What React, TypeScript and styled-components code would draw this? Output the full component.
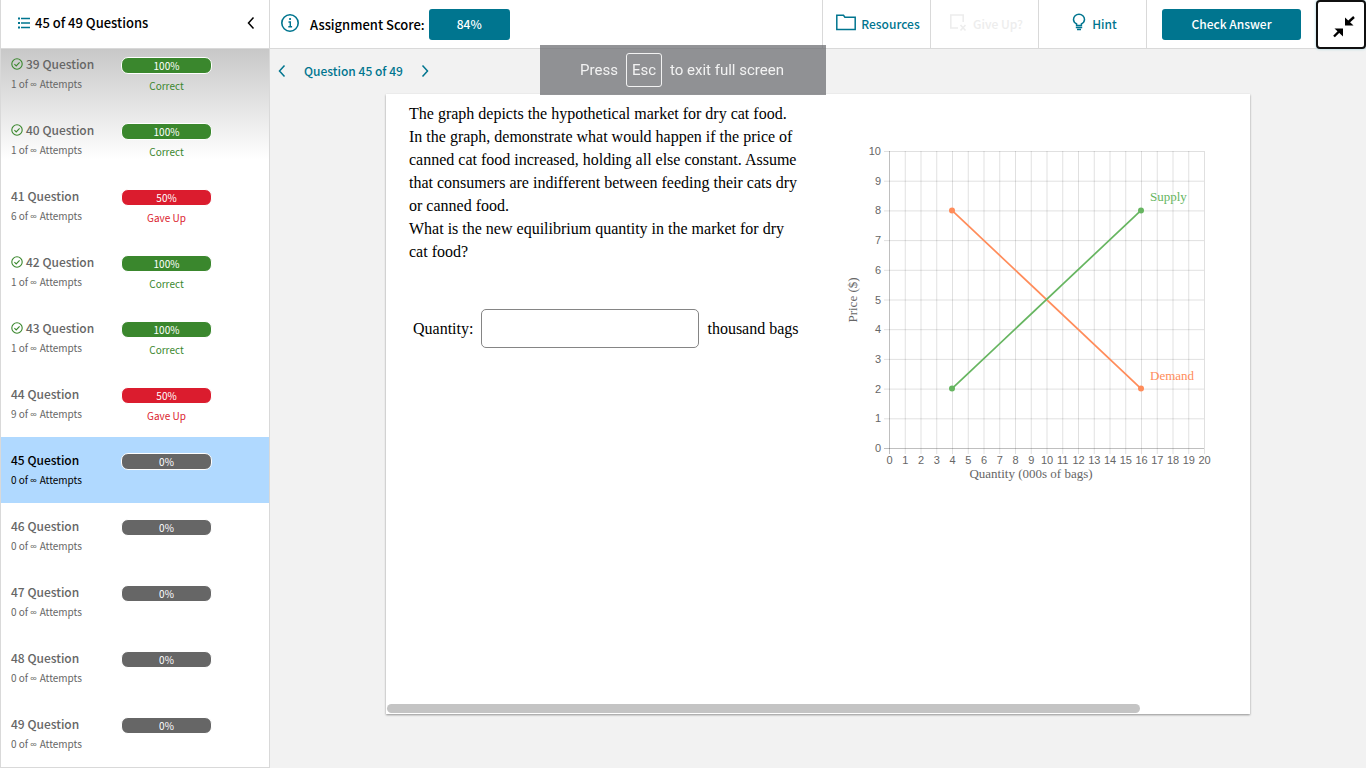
import React from 'react';
import styled, { createGlobalStyle } from 'styled-components';

const TEAL = '#00758f';
const LINE = '#d9d9d9';

const GlobalStyle = createGlobalStyle`
  *, *::before, *::after { box-sizing: border-box; }
  body {
    margin: 0;
    background: #f2f2f2;
    font-family: "Noto Sans CJK SC", sans-serif;
    font-size: 12px;
    color: #000;
  }
  button { font: inherit; cursor: pointer; }
`;

const Page = styled.div`
  display: flex;
  height: 100vh;
  overflow: hidden;
`;

const Sidebar = styled.aside`
  display: flex;
  flex-direction: column;
  flex: none;
  width: 270px;
  background: #fff;
  border: 1px solid ${LINE};
  border-top: 0;
`;

const SidebarHeader = styled.header`
  display: flex;
  align-items: center;
  flex: none;
  gap: 5px;
  height: 49px;
  padding: 0 12px 2px 17px;
  border-bottom: 1px solid ${LINE};
`;

const SidebarTitle = styled.h2`
  flex: 1;
  margin: 0;
  font-size: 13px;
  line-height: 20px;
  font-weight: 500;
`;

const IconButton = styled.button`
  display: flex;
  padding: 2px;
  border: 0;
  background: none;
  color: inherit;
`;

const QuestionList = styled.ul`
  display: flex;
  flex: 1;
  flex-direction: column;
  justify-content: flex-end;
  min-height: 0;
  margin: 0;
  padding: 0;
  overflow: hidden;
  list-style: none;
  background: linear-gradient(#c8c8c8, #fff 110px);
`;

const QuestionItem = styled.li<{ $active: boolean }>`
  display: flex;
  flex: none;
  gap: 16px;
  height: 66px;
  padding: 13px 10px 0;
  color: ${(p) => (p.$active ? '#000' : '#666')};
  background: ${(p) => (p.$active ? '#b0d9ff' : 'transparent')};
`;

const QuestionInfo = styled.div`
  width: 94px;
`;

const QuestionLink = styled.a`
  display: flex;
  align-items: center;
  gap: 3px;
  margin-bottom: 1px;
  color: inherit;
  font-weight: 500;
  line-height: 20px;
  text-decoration: none;
  white-space: nowrap;
`;

const Attempts = styled.div`
  font-size: 10px;
  line-height: 18px;
`;

const Infinity = styled.span`
  font-family: "Open Sans", sans-serif;
`;

const Result = styled.div<{ $color: string }>`
  width: 91px;
  padding-top: 3px;
  color: ${(p) => p.$color};
  font-size: 10px;
  line-height: 18px;
  text-align: center;
`;

const Score = styled.div<{ $color: string }>`
  height: 17px;
  margin-bottom: 3px;
  border: 1px solid #fff;
  border-radius: 7px;
  background: ${(p) => p.$color};
  color: #fff;
  line-height: 15px;
`;

const Main = styled.main`
  display: flex;
  flex: 1;
  flex-direction: column;
  min-width: 0;
`;

const TopBar = styled.header`
  display: flex;
  align-items: stretch;
  flex: none;
  height: 49px;
  background: #fff;
  border-bottom: 1px solid ${LINE};
`;

const ScoreGroup = styled.div`
  display: flex;
  align-items: center;
  flex: 1;
  padding-left: 9px;
  color: ${TEAL};
`;

const ScoreLabel = styled.span`
  margin: 0 4px 0 9px;
  color: #000;
  font-size: 13px;
  font-weight: 500;
`;

const PrimaryButton = styled.button<{ $width: number }>`
  width: ${(p) => p.$width}px;
  height: 31px;
  padding: 0 0 2px;
  border: 0;
  border-radius: 3px;
  background: ${TEAL};
  color: #fff;
  font-weight: 500;
`;

const ToolButton = styled.button`
  display: flex;
  align-items: center;
  justify-content: center;
  gap: 5px;
  width: 108px;
  padding: 0 0 2px 3px;
  border: 0;
  border-left: 1px solid ${LINE};
  background: none;
  color: ${TEAL};
  font-weight: 500;

  &:disabled { color: #ededed; }
`;

const SubmitCell = styled.div`
  display: flex;
  align-items: center;
  padding: 0 15px;
  border-left: 1px solid ${LINE};
`;

const FullscreenButton = styled.button`
  display: flex;
  align-items: center;
  justify-content: center;
  width: 50px;
  height: 49px;
  padding: 5px 0 0 6px;
  border: 2px solid #101010;
  border-radius: 4px;
  background: #fff;
  box-shadow: 0 0 3px #9fd0da;
`;

const QuestionNav = styled.nav`
  display: flex;
  align-items: center;
  flex: none;
  gap: 16px;
  height: 45px;
  padding: 0 0 2px 6px;
  color: ${TEAL};
  font-weight: 500;
`;

const Card = styled.section`
  display: flex;
  flex: 1;
  flex-direction: column;
  width: calc(100% - 32px);
  max-width: 864px;
  margin: 0 auto 54px;
  background: #fff;
  box-shadow: 0 1px 2px rgba(0, 0, 0, 0.4);
  font-family: "Liberation Serif", serif;
  font-size: 16px;
`;

const CardBody = styled.div`
  display: flex;
  flex: 1;
  gap: 43px;
  min-height: 0;
  padding: 8px 30px 0 23px;
`;

const Prompt = styled.div`
  width: 393px;
`;

const Paragraph = styled.p`
  margin: 0;
  line-height: 23px;
`;

const AnswerRow = styled.div`
  display: flex;
  align-items: center;
  gap: 8px;
  margin-top: 46px;
  padding-left: 4px;
  white-space: nowrap;
`;

const AnswerInput = styled.input`
  width: 218px;
  height: 39px;
  padding: 0 8px;
  border: 1px solid #858585;
  border-radius: 5px;
  font: inherit;
`;

const ChartFigure = styled.figure`
  flex: none;
  margin: 39px 0 0;
`;

const ScrollTrack = styled.div`
  flex: none;
  height: 10px;
  padding: 0 1px 1px;
`;

const ScrollThumb = styled.div`
  width: calc(100% - 109px);
  height: 9px;
  border-radius: 5px;
  background: #c4c4c4;
`;

const Toast = styled.div`
  position: fixed;
  top: 45px;
  left: 50%;
  display: flex;
  align-items: center;
  justify-content: center;
  gap: 8px;
  width: 286px;
  height: 50px;
  padding-right: 2px;
  transform: translateX(-50%);
  background: rgba(106, 107, 111, 0.72);
  color: #f2f2f2;
  font-family: Roboto, sans-serif;
  font-size: 15px;
  white-space: nowrap;
`;

const Key = styled.kbd`
  padding: 0 5px;
  border: 1px solid #f2f2f2;
  border-radius: 3px;
  font-family: inherit;
  font-size: 15px;
  line-height: 32px;
`;

const ListIcon = () => (
  <svg width="12" height="12" viewBox="0 0 12 12" stroke={TEAL} fill="none">
    <path d="M0 1.5h2M0 6h2M0 10.5h2" strokeWidth="2" />
    <path d="M3 1.5h9M3 6h9M3 10.5h9" strokeWidth="1.6" />
  </svg>
);

const Chevron = ({ right = false }: { right?: boolean }) => (
  <svg width="8" height="12" viewBox="0 0 8 12" fill="none" stroke="currentColor" strokeWidth="1.5">
    <path d={right ? 'M1.5 .5l5 5.5-5 5.5' : 'M6.5 .5l-5 5.5 5 5.5'} />
  </svg>
);

const CheckIcon = () => (
  <svg width="12" height="12" viewBox="0 0 12 12" fill="none" stroke="#3a872d" strokeWidth="1.1">
    <circle cx="6" cy="6" r="5.2" />
    <path d="M3.4 6.2l1.8 1.7 3.4-3.6" />
  </svg>
);

const InfoIcon = () => (
  <svg width="22" height="20" viewBox="0 0 22 20" fill="none" stroke="currentColor">
    <circle cx="11" cy="9" r="8.2" strokeWidth="1.6" />
    <path d="M9.5 8h1.8v4.6M9.3 12.8h3.8" strokeWidth="1.4" />
    <path d="M10.2 5h1.7" strokeWidth="1.8" />
  </svg>
);

const FolderIcon = () => (
  <svg width="20" height="20" viewBox="0 0 20 20" fill="none" stroke="currentColor" strokeWidth="1.5">
    <path d="M.8 16.6V2.2h6.7l1.4 2h10.3v12.4z" />
  </svg>
);

const GiveUpIcon = () => (
  <svg width="19" height="20" viewBox="0 0 19 20" fill="none" stroke="currentColor" strokeWidth="1.6">
    <path d="M9 15H1.8V2h12.4v7M11.5 12l5 5.5M16.5 12l-5 5.5" />
  </svg>
);

const BulbIcon = () => (
  <svg width="16" height="20" viewBox="-1 -1 16 20" fill="none" stroke="currentColor" strokeWidth="1.5">
    <path d="M4.6 11.6V10C2.8 9 1.5 7.5 1.5 5.5a5.5 5.2 0 0 1 11 0c0 2-1.3 3.5-3.1 4.5v1.6zM3.8 13.6h6.4M5 15.6h4" />
  </svg>
);

const ExitFullscreenIcon = () => (
  <svg width="22" height="22" viewBox="0 0 22 22" fill="#000" stroke="#000" strokeWidth="2.4">
    <path d="M12 1.5v8h8.5z" stroke="none" />
    <path d="M14.5 7l6.5-6M1 20.5l6.5-6.5" />
    <path d="M10 20.5v-8H1.5z" stroke="none" />
  </svg>
);

const GREEN = '#3a872d';
const RED = '#db1c2e';
const GREY = '#666666';

type Question = { id: number; tries: number; score: number; status?: 'Correct' | 'Gave Up' };

const questions: Question[] = [
  { id: 39, tries: 1, score: 100, status: 'Correct' },
  { id: 40, tries: 1, score: 100, status: 'Correct' },
  { id: 41, tries: 6, score: 50, status: 'Gave Up' },
  { id: 42, tries: 1, score: 100, status: 'Correct' },
  { id: 43, tries: 1, score: 100, status: 'Correct' },
  { id: 44, tries: 9, score: 50, status: 'Gave Up' },
  { id: 45, tries: 0, score: 0 },
  { id: 46, tries: 0, score: 0 },
  { id: 47, tries: 0, score: 0 },
  { id: 48, tries: 0, score: 0 },
  { id: 49, tries: 0, score: 0 },
];

const statusColor = (status?: string) =>
  status === 'Correct' ? GREEN : status === 'Gave Up' ? RED : GREY;

const range = (n: number) => Array.from({ length: n + 1 }, (_, i) => i);

const AxisText = styled.text`
  fill: #666;
  font-family: "Liberation Sans", sans-serif;
  font-size: 11px;
`;

const ChartText = styled.text`
  font-family: "Liberation Serif", serif;
  font-size: 13px;
`;

const X0 = 44;
const Y0 = 307;
const px = (q: number) => X0 + q * 15.75;
const py = (p: number) => Y0 - p * 29.7;

const MarketChart = () => (
  <svg width="370" height="350" viewBox="0 0 370 350" role="img" aria-label="Supply and demand for dry cat food">
    {range(20).map((q) => (
      <g key={q}>
        <line
          x1={px(q) + 0.5} x2={px(q) + 0.5} y1={py(10)} y2={Y0 + 6}
          stroke="#000" strokeOpacity={q === 0 ? 0.25 : 0.12}
        />
        <AxisText x={px(q) + 0.5} y={Y0 + 16} textAnchor="middle">{q}</AxisText>
      </g>
    ))}
    {range(10).map((p) => (
      <g key={p}>
        <line
          x1={X0 - 5} x2={px(20)} y1={py(p) + 0.5} y2={py(p) + 0.5}
          stroke="#000" strokeOpacity={p === 0 ? 0.25 : 0.12}
        />
        <AxisText x={X0 - 8} y={py(p) + 4} textAnchor="end">{p}</AxisText>
      </g>
    ))}
    <g stroke="#ff8c5a" fill="#ff8c5a" strokeWidth="1.7">
      <line x1={px(4)} y1={py(8)} x2={px(16)} y2={py(2)} />
      <circle cx={px(4)} cy={py(8)} r="3" stroke="none" />
      <circle cx={px(16)} cy={py(2)} r="3" stroke="none" />
    </g>
    <g stroke="#66b560" fill="#66b560" strokeWidth="1.7">
      <line x1={px(4)} y1={py(2)} x2={px(16)} y2={py(8)} />
      <circle cx={px(4)} cy={py(2)} r="3" stroke="none" />
      <circle cx={px(16)} cy={py(8)} r="3" stroke="none" />
    </g>
    <ChartText x="305" y="60" fill="#66b560">Supply</ChartText>
    <ChartText x="305" y="239" fill="#ff8c5a">Demand</ChartText>
    <ChartText x="186" y="337" fill="#666" textAnchor="middle">Quantity (000s of bags)</ChartText>
    <ChartText x="12" y="159" fill="#666" textAnchor="middle" transform="rotate(-90 12 159)">Price ($)</ChartText>
  </svg>
);

export default function App() {
  return (
    <Page>
      <GlobalStyle />
      <Sidebar>
        <SidebarHeader>
          <ListIcon />
          <SidebarTitle>45 of 49 Questions</SidebarTitle>
          <IconButton aria-label="Collapse question list"><Chevron /></IconButton>
        </SidebarHeader>
        <QuestionList>
          {questions.map((q) => (
            <QuestionItem key={q.id} $active={q.id === 45}>
              <QuestionInfo>
                <QuestionLink href={`#question-${q.id}`}>
                  {q.status === 'Correct' && <CheckIcon />}
                  {q.id} Question
                </QuestionLink>
                <Attempts>{q.tries} of <Infinity>∞</Infinity> Attempts</Attempts>
              </QuestionInfo>
              <Result $color={statusColor(q.status)}>
                <Score $color={statusColor(q.status)}>{q.score}%</Score>
                {q.status}
              </Result>
            </QuestionItem>
          ))}
        </QuestionList>
      </Sidebar>

      <Main>
        <TopBar>
          <ScoreGroup>
            <InfoIcon />
            <ScoreLabel>Assignment Score:</ScoreLabel>
            <PrimaryButton $width={81}>84%</PrimaryButton>
          </ScoreGroup>
          <ToolButton><FolderIcon />Resources</ToolButton>
          <ToolButton disabled><GiveUpIcon />Give Up?</ToolButton>
          <ToolButton><BulbIcon />Hint</ToolButton>
          <SubmitCell>
            <PrimaryButton $width={139}>Check Answer</PrimaryButton>
          </SubmitCell>
          <FullscreenButton aria-label="Exit full screen"><ExitFullscreenIcon /></FullscreenButton>
        </TopBar>

        <QuestionNav>
          <IconButton aria-label="Previous question"><Chevron /></IconButton>
          <span>Question 45 of 49</span>
          <IconButton aria-label="Next question"><Chevron right /></IconButton>
        </QuestionNav>

        <Card>
          <CardBody>
            <Prompt>
              <Paragraph>
                The graph depicts the hypothetical market for dry cat food. In the graph, demonstrate
                what would happen if the price of canned cat food increased, holding all else constant.
                Assume that consumers are indifferent between feeding their cats dry or canned food.
              </Paragraph>
              <Paragraph>What is the new equilibrium quantity in the market for dry cat food?</Paragraph>
              <AnswerRow>
                <label htmlFor="quantity">Quantity:</label>
                <AnswerInput id="quantity" type="text" />
                <span>thousand bags</span>
              </AnswerRow>
            </Prompt>
            <ChartFigure><MarketChart /></ChartFigure>
          </CardBody>
          <ScrollTrack><ScrollThumb /></ScrollTrack>
        </Card>
      </Main>

      <Toast role="status">
        <span>Press</span>
        <Key>Esc</Key>
        <span>to exit full screen</span>
      </Toast>
    </Page>
  );
}
